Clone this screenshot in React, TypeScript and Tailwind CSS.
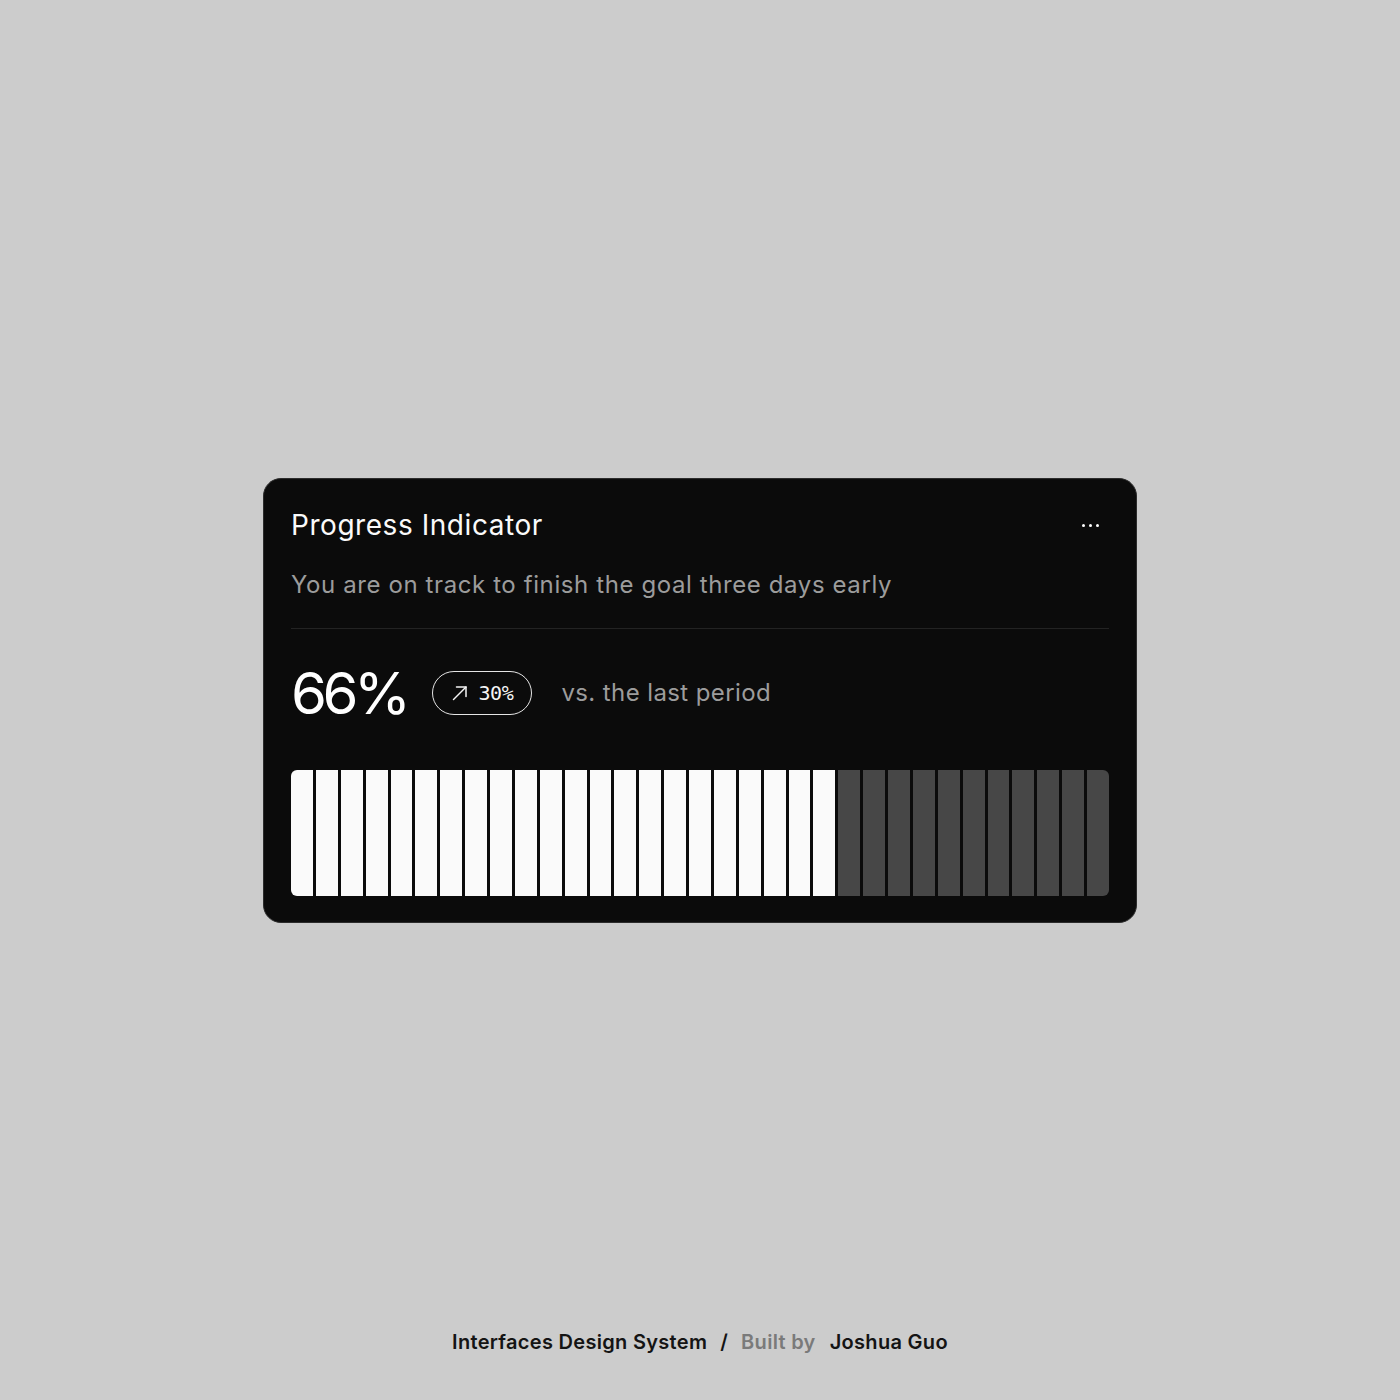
import React from 'react';

const TOTAL = 33;
const FILLED = 22;

const TrendArrow: React.FC = () => (
  <svg width="16" height="16" viewBox="0 0 16 16" fill="none" stroke="currentColor" strokeWidth="1.5" strokeLinecap="round" strokeLinejoin="round">
    <path d="M1.5 14.5 14 2" />
    <path d="M4.5 2H14v9.5" />
  </svg>
);

const ProgressCard: React.FC = () => {
  const segments = Array.from({ length: TOTAL }, (_, i) => i < FILLED);

  return (
    <div className="w-[874px] bg-[#0b0b0b] border border-[#2c2c2c] rounded-[18px] px-[27px] pt-[26px] pb-[26px]">
      {/* Header */}
      <div className="flex items-center justify-between">
        <h2 className="text-[28px] leading-[40px] text-[#fafafa] font-['Inter'] tracking-[0.55px]">Progress Indicator</h2>
        <div className="flex items-center gap-[4px] pr-[10px]">
          <span className="w-[3px] h-[3px] rounded-full bg-white" />
          <span className="w-[3px] h-[3px] rounded-full bg-white" />
          <span className="w-[3px] h-[3px] rounded-full bg-white" />
        </div>
      </div>
      <p className="mt-[24px] text-[24px] leading-[32px] text-[#9c9c9c] font-['Inter'] tracking-[0.6px]">
        You are on track to finish the goal three days early
      </p>

      <div className="mt-[27px] h-px bg-[#232323]" />

      {/* Stats */}
      <div className="mt-[30px] flex items-center">
        <span className="text-[58px] leading-[68px] text-white font-['Inter'] tracking-[-4.5px]">66%</span>
        <span className="ml-[26px] h-[44px] w-[100px] flex items-center justify-center gap-[11px] rounded-full border-[1.5px] border-[#e5e5e5] text-[#f5f5f5]">
          <TrendArrow />
          <span className="text-[20px] font-['DejaVu_Sans_Mono'] tracking-[-0.5px]">30%</span>
        </span>
        <span className="ml-[29px] text-[24px] text-[#9c9c9c] font-['Inter'] tracking-[0.4px]">vs. the last period</span>
      </div>

      {/* Segmented bar */}
      <div className="mt-[43px] flex gap-[3px] h-[126px] rounded-[6px] overflow-hidden">
        {segments.map((on, i) => (
          <div key={i} className={on ? 'flex-1 bg-[#fafafa]' : 'flex-1 bg-[#474747]'} />
        ))}
      </div>
    </div>
  );
};

export default function App() {
  return (
    <div className="h-[1400px] bg-[#cccccc] flex flex-col items-center pt-[478px] pb-[43px]">
      <ProgressCard />
      <div className="mt-auto flex items-center text-[20px] font-semibold font-['Inter'] text-[#141414] tracking-[0.3px]">
        <span>Interfaces Design System</span>
        <span className="mx-[13px]">/</span>
        <span className="text-[#7a7a7a]">Built by</span>
        <span className="ml-[14px]">Joshua Guo</span>
      </div>
    </div>
  );
}
